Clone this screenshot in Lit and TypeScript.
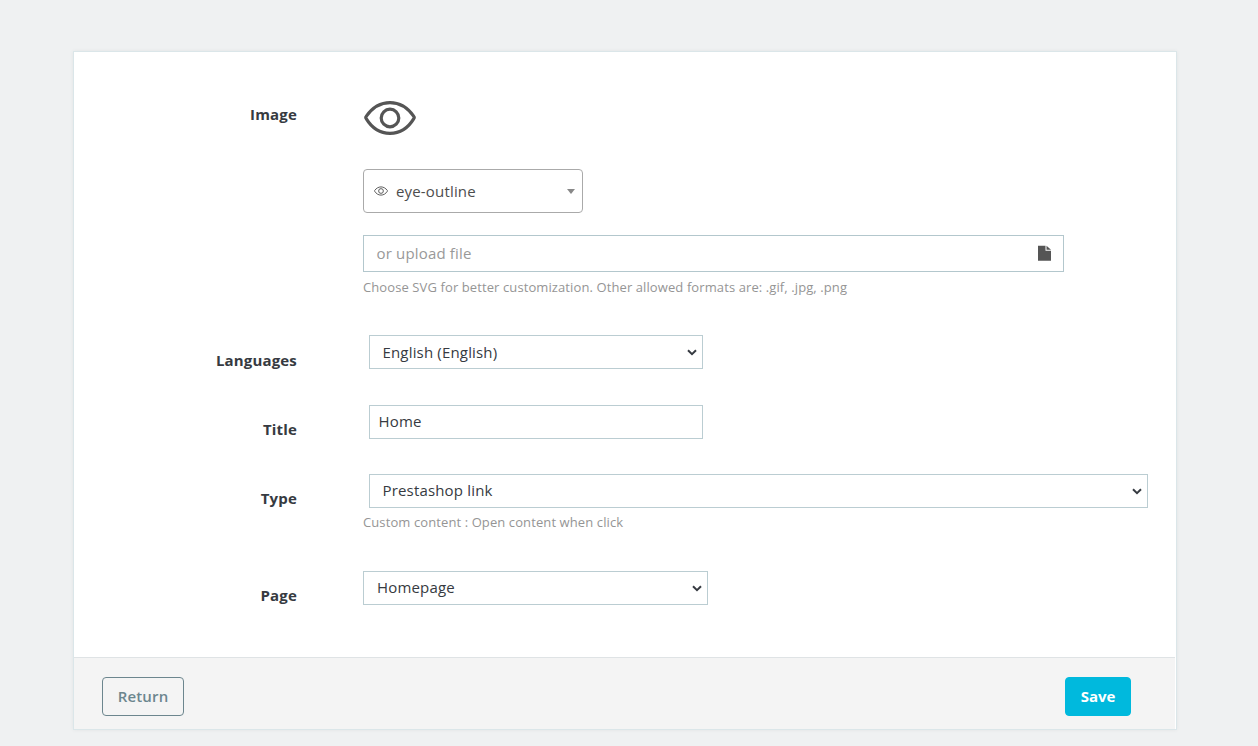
import { LitElement, html, css, svg } from "lit";
import { customElement } from "lit/decorators.js";

const eye = svg`<path d="M2.200 17.600C1.500 16.700 1.500 16.300 2.200 15.400C8 7.200 16.800 1.700 26 1.700S44 7.200 49.800 15.400C50.500 16.300 50.500 16.700 49.800 17.600C44 27.200 35.200 32.300 26 32.300S8 27.200 2.200 17.600Z"/><circle cx="26" cy="17" r="8.800"/>`;

@customElement("app-root")
export class AppRoot extends LitElement {
  static styles = css`
    :host { display: block; box-sizing: border-box; height: 746px; overflow: hidden; padding: 51px 81px 0 73px; background: #eff1f2; font: 15px/20px "Open Sans", sans-serif; letter-spacing: 0.17px; color: #363a41; }
    * { box-sizing: border-box; }
    .card { height: 679px; display: flex; flex-direction: column; background: #fff; border: 1px solid #dbe6e9; box-shadow: 0 0 4px rgba(0, 0, 0, 0.06); }
    .body { flex: 1; padding-top: 39px; }
    .row { display: grid; grid-template-columns: 223px 1fr; column-gap: 66px; }
    .label { text-align: right; font-weight: 700; padding-top: 14px; }
    .image { height: 244px; }
    .image .label { padding-top: 13px; }
    .languages { height: 70px; }
    .languages .label { padding-top: 15px; }
    .title { height: 69px; }
    .type { height: 97px; }
    .eye { display: block; width: 52px; height: 34px; margin: 10px 0 34px 1px; fill: none; stroke: #555; stroke-width: 3.200; stroke-linejoin: round; }
    .picker { display: flex; align-items: center; width: 220px; height: 44px; border: 1px solid #aaa; border-radius: 4px; padding: 0 7px 0 9.500px; color: #4d4d4d; }
    .picker span { flex: 1; margin-left: 8.500px; }
    .mini { width: 14px; height: 10px; fill: none; stroke: #444; stroke-width: 3.200; margin-top: -1px; }
    .arrow { border: 4px solid transparent; border-top: 5px solid #888; border-bottom: 0; }
    .upload { display: flex; align-items: center; justify-content: space-between; width: 701px; height: 37px; margin-top: 22px; padding: 0 11px 1px 12.500px; border: 1px solid #b3c7cd; color: #999; }
    .help { font-size: 13px; line-height: 18px; letter-spacing: 0.1px; color: #959595; margin-top: 6px; }
    .type .help { margin-top: 5px; }
    .field { display: block; height: 34px; margin-left: 6px; width: 334px; border: 1px solid #bbcdd2; border-radius: 0; background: #fff; font: inherit; letter-spacing: inherit; color: #363a41; padding: 0 9px 2px 8.500px; outline: none; }
    select.field { appearance: none; padding-left: 12.500px; background: #fff url("data:image/svg+xml,%3Csvg xmlns='http://www.w3.org/2000/svg' width='10' height='7' viewBox='0 0 10 7'%3E%3Cpath d='M1 1.200L5 5.100L9 1.200' fill='none' stroke='%23363a41' stroke-width='2'/%3E%3C/svg%3E") no-repeat right 5px top 13px; }
    .languages .field { padding-bottom: 0; }
    .wide { width: 779px; }
    .page select.field { margin-left: 0; width: 345px; padding-left: 13px; }
    .footer { display: flex; justify-content: space-between; align-items: center; height: 72px; margin-right: 1px; padding: 6px 44px 0 28px; background: #f4f4f4; border-top: 1px solid #dfe3e5; }
    .btn { height: 39px; border: 1px solid #6c868e; border-radius: 4px; background: none; color: #6c868e; font: 600 15px "Open Sans", sans-serif; letter-spacing: 0.17px; width: 82px; padding: 0 0 2px; }
    .save { width: 66px; background: #00b9dd; border-color: #00b9dd; color: #fff; font-weight: 700; letter-spacing: 0; }
  `;

  render() {
    return html`
      <form class="card">
        <div class="body">
          <div class="row image">
            <div class="label">Image</div>
            <div>
              <svg class="eye" viewBox="0 0 52 34">${eye}</svg>
              <div class="picker">
                <svg class="mini" viewBox="0 0 52 34">${eye}</svg>
                <span>eye-outline</span><i class="arrow"></i>
              </div>
              <div class="upload">
                <span>or upload file</span>
                <svg width="14" height="16" viewBox="0 0 14 16"><path fill="#555" d="M0 .8H7.500V5.800H13V15.800H0ZM8.500 .8L13 4.800H8.500Z"/></svg>
              </div>
              <div class="help">Choose SVG for better customization. Other allowed formats are: .gif, .jpg, .png</div>
            </div>
          </div>
          <div class="row languages">
            <div class="label">Languages</div>
            <select class="field"><option>English (English)</option></select>
          </div>
          <div class="row title">
            <div class="label">Title</div>
            <input class="field" .value=${"Home"} />
          </div>
          <div class="row type">
            <div class="label">Type</div>
            <div>
              <select class="field wide"><option>Prestashop link</option></select>
              <div class="help">Custom content : Open content when click</div>
            </div>
          </div>
          <div class="row page">
            <div class="label">Page</div>
            <select class="field"><option>Homepage</option></select>
          </div>
        </div>
        <div class="footer">
          <button type="button" class="btn">Return</button>
          <button type="button" class="btn save">Save</button>
        </div>
      </form>
    `;
  }
}
